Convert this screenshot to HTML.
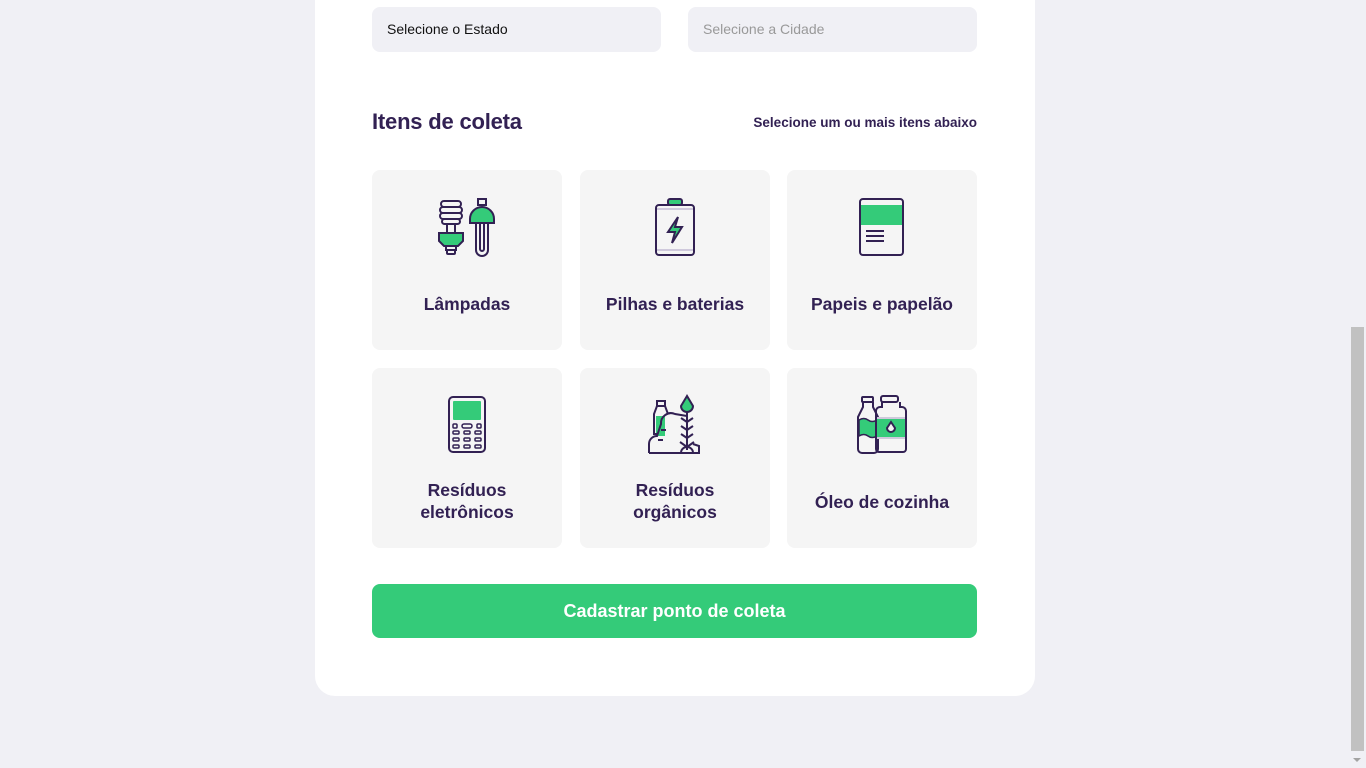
<!DOCTYPE html>
<html><head><meta charset="utf-8">
<style>
*{box-sizing:border-box;margin:0;padding:0}
html,body{width:1366px;height:768px;overflow:hidden;background:#f0f0f5;font-family:"Liberation Sans",Arial,sans-serif;color:#322153}
.panel{position:absolute;left:315px;top:-20px;width:720px;height:716px;background:#fff;border-radius:20px}
.sel{position:absolute;top:7px;width:289px;height:45px;background:#f0f0f5;border-radius:8px;font-size:14px;padding:14px 15px;color:#111}
h2{position:absolute;left:372px;top:109px;font-size:22px;font-weight:bold;color:#322153;letter-spacing:-0.2px}
.hint{position:absolute;left:700px;width:277px;text-align:right;top:115px;font-size:13.5px;font-weight:bold;color:#322153}
.card{position:absolute;width:190px;height:180px;background:#f5f5f5;border-radius:8px;text-align:center}
.card svg{position:absolute;left:65px;top:26px}
.card span{position:absolute;left:0;right:0;font-size:17.5px;font-weight:bold;line-height:22px;color:#322153}
.btn{position:absolute;left:372px;top:584px;width:605px;height:54px;background:#34cb79;border-radius:8px;color:#fff;font-size:18px;font-weight:bold;text-align:center;line-height:54px}
.sb{position:absolute;left:1351px;top:327px;width:13px;height:424px;background:#c1c1c1}
.arr{position:absolute;left:1353px;top:758px;width:0;height:0;border-left:4px solid transparent;border-right:4px solid transparent;border-top:4px solid #a3a3a3}
</style></head><body>
<div class="panel"></div>
<div class="sel" style="left:372px">Selecione o Estado</div>
<div class="sel" style="left:688px;color:#999">Selecione a Cidade</div>
<h2>Itens de coleta</h2>
<div class="hint">Selecione um ou mais itens abaixo</div>

<div class="card" style="left:372px;top:170px">
<svg width="60" height="62" viewBox="0 0 60 62" fill="none" stroke="#322153" stroke-width="2">
<rect x="4" y="5" width="20" height="6" rx="3"/><rect x="3" y="11" width="22" height="6" rx="3"/><rect x="3" y="17" width="22" height="6" rx="3"/><rect x="5" y="23" width="18" height="5" rx="2.5"/>
<rect x="10" y="28" width="8" height="9"/>
<path d="M2 37h24v8l-5 5H7l-5-5z" fill="#34cb79"/>
<rect x="9" y="50" width="10" height="4"/><rect x="10" y="54" width="8" height="4" rx="1"/>
<rect x="41" y="3" width="8" height="6"/>
<path d="M33 23a12 12 0 0 1 24 0v4H33z" fill="#34cb79"/>
<path d="M39 27v27a6 6 0 0 0 12 0V27"/><path d="M43 27v26a2 2 0 0 0 4 0V27"/>
</svg><span style="top:123px">Lâmpadas</span></div>

<div class="card" style="left:580px;top:170px">
<svg width="60" height="62" viewBox="0 0 60 62" fill="none" stroke="#322153" stroke-width="2">
<rect x="23" y="3" width="14" height="6" rx="2" fill="#34cb79"/>
<rect x="11" y="9" width="38" height="50" rx="3"/>
<path d="M12 13h36M12 54h36" stroke="#cfc9dc"/>
<path d="M33 21l-10 15h7l-3 11 10-16h-7z" fill="#34cb79"/>
</svg><span style="top:123px">Pilhas e baterias</span></div>

<div class="card" style="left:787px;top:170px">
<svg width="60" height="62" viewBox="0 0 60 62" fill="none" stroke="#322153" stroke-width="2">
<rect x="9" y="9" width="41" height="20" fill="#34cb79" stroke="none"/>
<rect x="8" y="3" width="43" height="56" rx="3"/>
<path d="M14 35h18M14 40h18M14 45h18"/>
</svg><span style="top:123px">Papeis e papelão</span></div>

<div class="card" style="left:372px;top:368px">
<svg width="60" height="62" viewBox="0 0 60 62" fill="none" stroke="#322153" stroke-width="2">
<rect x="12" y="3" width="36" height="55" rx="4"/>
<rect x="16" y="7" width="28" height="19" rx="1" fill="#34cb79" stroke="none"/>
<g stroke-width="1.5"><rect x="16" y="30" width="4" height="4" rx="1"/><rect x="25" y="30" width="10" height="4" rx="2"/><rect x="40" y="30" width="4" height="4" rx="1"/>
<rect x="16" y="37" width="6" height="3" rx="1"/><rect x="27" y="37" width="6" height="3" rx="1"/><rect x="38" y="37" width="6" height="3" rx="1"/>
<rect x="16" y="44" width="6" height="3" rx="1"/><rect x="27" y="44" width="6" height="3" rx="1"/><rect x="38" y="44" width="6" height="3" rx="1"/>
<rect x="16" y="51" width="6" height="3" rx="1"/><rect x="27" y="51" width="6" height="3" rx="1"/><rect x="38" y="51" width="6" height="3" rx="1"/></g>
</svg><span style="top:111px">Resíduos<br>eletrônicos</span></div>

<div class="card" style="left:580px;top:368px">
<svg width="60" height="62" viewBox="0 0 60 62" fill="none" stroke="#322153" stroke-width="2">
<path d="M42 2l-6 10a6 6 0 0 0 6 6a6 6 0 0 0 6-6z" fill="#34cb79"/>
<rect x="12" y="7" width="8" height="5"/>
<path d="M11 22h9v20h-9z" fill="#34cb79" stroke="none"/>
<path d="M12 12l-3 8v20h4" /><path d="M20 12l3 8"/>
<path d="M4 59V50a8 8 0 0 1 8-8l4-12a10 10 0 0 1 14-10l12 2"/>
<path d="M13 46h5M16 36h5"/>
<path d="M42 18v38M36 24l6 4 6-4M36 32l6 4 6-4M36 40l6 4 6-4M35 48l7 5 7-5M36 58a6 6 0 0 1 6-5a6 6 0 0 1 6 5"/>
<path d="M4 59h50v-7l-6-2"/>
</svg><span style="top:111px">Resíduos<br>orgânicos</span></div>

<div class="card" style="left:787px;top:368px">
<svg width="60" height="62" viewBox="0 0 60 62" fill="none" stroke="#322153" stroke-width="2">
<rect x="10" y="3" width="11" height="5" rx="1"/>
<path d="M11 8v5l-5 10v32a4 4 0 0 0 4 4h12a4 4 0 0 0 4-4V23l-5-10V8"/>
<path d="M7 26q5-3 9 0t9 0v16q-5 3-9 0t-9 0z" fill="#34cb79" stroke-width="1.5"/>
<rect x="29" y="2" width="17" height="6" rx="2"/>
<path d="M30 8v5h-2a4 4 0 0 0-4 4v38a3 3 0 0 0 3 3h24a3 3 0 0 0 3-3V17a4 4 0 0 0-4-4h-2V8"/>
<rect x="25" y="24" width="28" height="20" fill="#34cb79" stroke="none"/>
<path d="M25 24h28M25 44h28" stroke="#cfc9dc"/>
<path d="M39 28l-4 6a4 4 0 0 0 8 0z" fill="#f5f5f5"/>
</svg><span style="top:123px">Óleo de cozinha</span></div>

<div class="btn">Cadastrar ponto de coleta</div>
<div class="sb"></div><div class="arr"></div>
</body></html>
